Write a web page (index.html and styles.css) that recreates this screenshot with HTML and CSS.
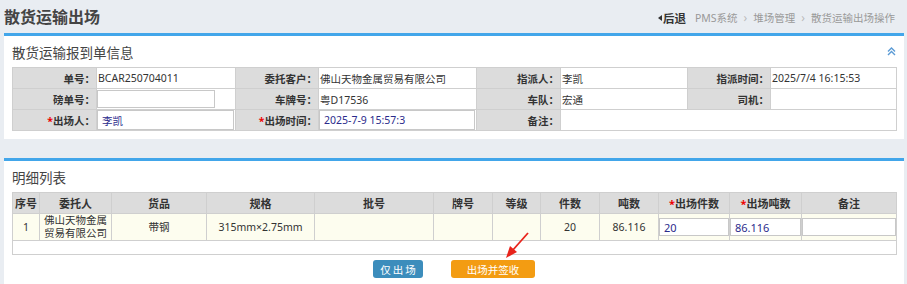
FILE: index.html
```html
<!DOCTYPE html>
<html lang="zh-CN">
<head>
  <meta charset="UTF-8">
  <title>散货运输出场</title>
  <link rel="stylesheet" href="styles.css">
</head>
<body>
  <div class="page-head">
    <h1>散货运输出场</h1>
    <div class="crumbs">
      <span class="back"><span class="tri"></span>后退</span>
      <span>PMS系统</span><span class="sep">›</span>
      <span>堆场管理</span><span class="sep">›</span>
      <span>散货运输出场操作</span>
    </div>
  </div>

  <div class="panel">
    <div class="panel-head">
      <span>散货运输报到单信息</span>
      <svg class="collapse" width="9" height="9" viewBox="0 0 9 9">
        <path d="M1 4.5 L4.5 1 L8 4.5 M1 8 L4.5 4.5 L8 8" fill="none" stroke="#5b9bd5" stroke-width="1.4"/>
      </svg>
    </div>
    <table class="form">
      <colgroup>
        <col style="width:84px"><col style="width:139px"><col style="width:83px"><col style="width:158px">
        <col style="width:84px"><col style="width:127px"><col style="width:83px"><col style="width:126px">
      </colgroup>
      <tr>
        <th>单号：</th><td>BCAR250704011</td>
        <th>委托客户：</th><td>佛山天物金属贸易有限公司</td>
        <th>指派人：</th><td>李凯</td>
        <th>指派时间：</th><td>2025/7/4 16:15:53</td>
      </tr>
      <tr>
        <th>磅单号：</th><td><input class="short" type="text"></td>
        <th>车牌号：</th><td>粤D17536</td>
        <th>车队：</th><td>宏通</td>
        <th>司机：</th><td></td>
      </tr>
      <tr>
        <th><em>*</em>出场人：</th><td><input type="text" value="李凯"></td>
        <th><em>*</em>出场时间：</th><td><input type="text" value="2025-7-9 15:57:3"></td>
        <th>备注：</th><td colspan="3"></td>
      </tr>
    </table>
  </div>

  <div class="panel detail">
    <div class="panel-head">
      <span>明细列表</span>
    </div>
    <table class="grid">
      <colgroup>
        <col style="width:27px"><col style="width:72px"><col style="width:95px"><col style="width:108px">
        <col style="width:119px"><col style="width:59px"><col style="width:48px"><col style="width:59px">
        <col style="width:59px"><col style="width:71px"><col style="width:72px"><col style="width:95px">
      </colgroup>
      <tr>
        <th>序号</th><th>委托人</th><th>货品</th><th>规格</th><th>批号</th><th>牌号</th>
        <th>等级</th><th>件数</th><th>吨数</th><th><em>*</em>出场件数</th><th><em>*</em>出场吨数</th><th>备注</th>
      </tr>
      <tr class="row">
        <td>1</td><td>佛山天物金属<br>贸易有限公司</td><td>带钢</td><td>315mm×2.75mm</td><td></td><td></td>
        <td></td><td>20</td><td>86.116</td>
        <td class="cell-input"><input type="text" value="20"></td>
        <td class="cell-input"><input type="text" value="86.116"></td>
        <td class="cell-input"><input type="text"></td>
      </tr>
      <tr class="empty"><td colspan="12"></td></tr>
    </table>
    <div class="actions">
      <button class="btn btn-blue">仅出场</button>
      <button class="btn btn-orange">出场并签收</button>
    </div>
    <svg class="arrow" width="30" height="30" viewBox="0 0 30 30">
      <path d="M25 2 L9 20" stroke="#e8231b" stroke-width="1.8" fill="none"/>
      <path d="M3 27 L7 15 L14 21 Z" fill="#e8231b"/>
    </svg>
  </div>
</body>
</html>
```

FILE: styles.css
```css
body {
  margin: 0;
  background: #e9edf2;
  font-family: "Noto Sans", "Noto Sans CJK SC", sans-serif;
  font-size: 10.5px;
  color: #333;
}

.page-head {
  height: 33px;
  padding: 0 12px 0 4px;
  display: flex;
  justify-content: space-between;
  align-items: center;
}

.page-head h1 {
  margin: 0 0 2px;
  font-size: 16px;
  font-weight: bold;
  color: #444;
}

.crumbs {
  display: flex;
  align-items: center;
  gap: 6px;
  color: #999;
  font-size: 10.5px;
  padding-top: 2px;
}

.crumbs .back {
  color: #333;
  font-weight: bold;
  font-size: 11.5px;
  margin-right: 3px;
  display: flex;
  align-items: center;
}

.crumbs .tri {
  width: 0;
  height: 0;
  border-top: 3px solid transparent;
  border-bottom: 3px solid transparent;
  border-right: 4px solid #333;
  margin-right: 1px;
}

.crumbs .sep {
  color: #bbb;
  font-size: 12px;
}

.panel {
  margin: 0 3px 0 4px;
  background: #fff;
  border-top: 3px solid #42a6ea;
  padding: 0 8px 8px;
}

.panel-head {
  height: 31px;
  display: flex;
  justify-content: space-between;
  align-items: center;
  font-size: 13.5px;
  color: #444;
}

table {
  border-collapse: collapse;
  table-layout: fixed;
  width: 884px;
}

.form th,
.form td {
  border: 1px solid #cfcfcf;
  height: 20px;
  padding: 0 0 0 1px;
  white-space: nowrap;
  overflow: hidden;
}

.form th {
  background: #dcdcdc;
  text-align: right;
  font-weight: bold;
  color: #333;
  padding-right: 1px;
}

em {
  color: #e00;
  font-style: normal;
}

.form input {
  display: block;
  box-sizing: border-box;
  width: 100%;
  height: 20px;
  border: 1px solid #c8c8c8;
  padding: 0 4px;
  margin: 0 0 0 -1px;
  font: inherit;
  color: #2b2b8c;
  background: #fff;
}

.form input.short {
  width: 118px;
  height: 18px;
}

.detail {
  margin-top: 19px;
  position: relative;
  padding-bottom: 10px;
}

.grid th,
.grid td {
  border: 1px solid #cfcfcf;
  text-align: center;
  padding: 0;
}

.grid th {
  background: #dcdcdc;
  height: 20px;
  font-weight: bold;
  font-size: 11px;
}

.grid .row td {
  background: #fdfdef;
  height: 26px;
  line-height: 13px;
  font-size: 10.5px;
}

.grid .cell-input input {
  display: block;
  box-sizing: border-box;
  width: 100%;
  height: 18px;
  border: 1px solid #c8c8c8;
  padding: 0 4px;
  font: inherit;
  font-size: 11px;
  color: #2b2b8c;
  background: #fff;
}

.grid .empty td {
  height: 13px;
  background: #fff;
}

.actions {
  display: flex;
  justify-content: center;
  gap: 28px;
  margin-top: 5px;
}

.btn {
  height: 18px;
  border: none;
  border-radius: 3px;
  color: #fff;
  font: inherit;
  font-size: 10.5px;
  padding: 0;
}

.btn-blue {
  width: 50px;
  background: #3c8dbc;
  letter-spacing: 2px;
  text-indent: 2px;
}

.btn-orange {
  width: 84px;
  background: #f39c12;
}

.arrow {
  position: absolute;
  left: 499px;
  top: 70px;
}
```
